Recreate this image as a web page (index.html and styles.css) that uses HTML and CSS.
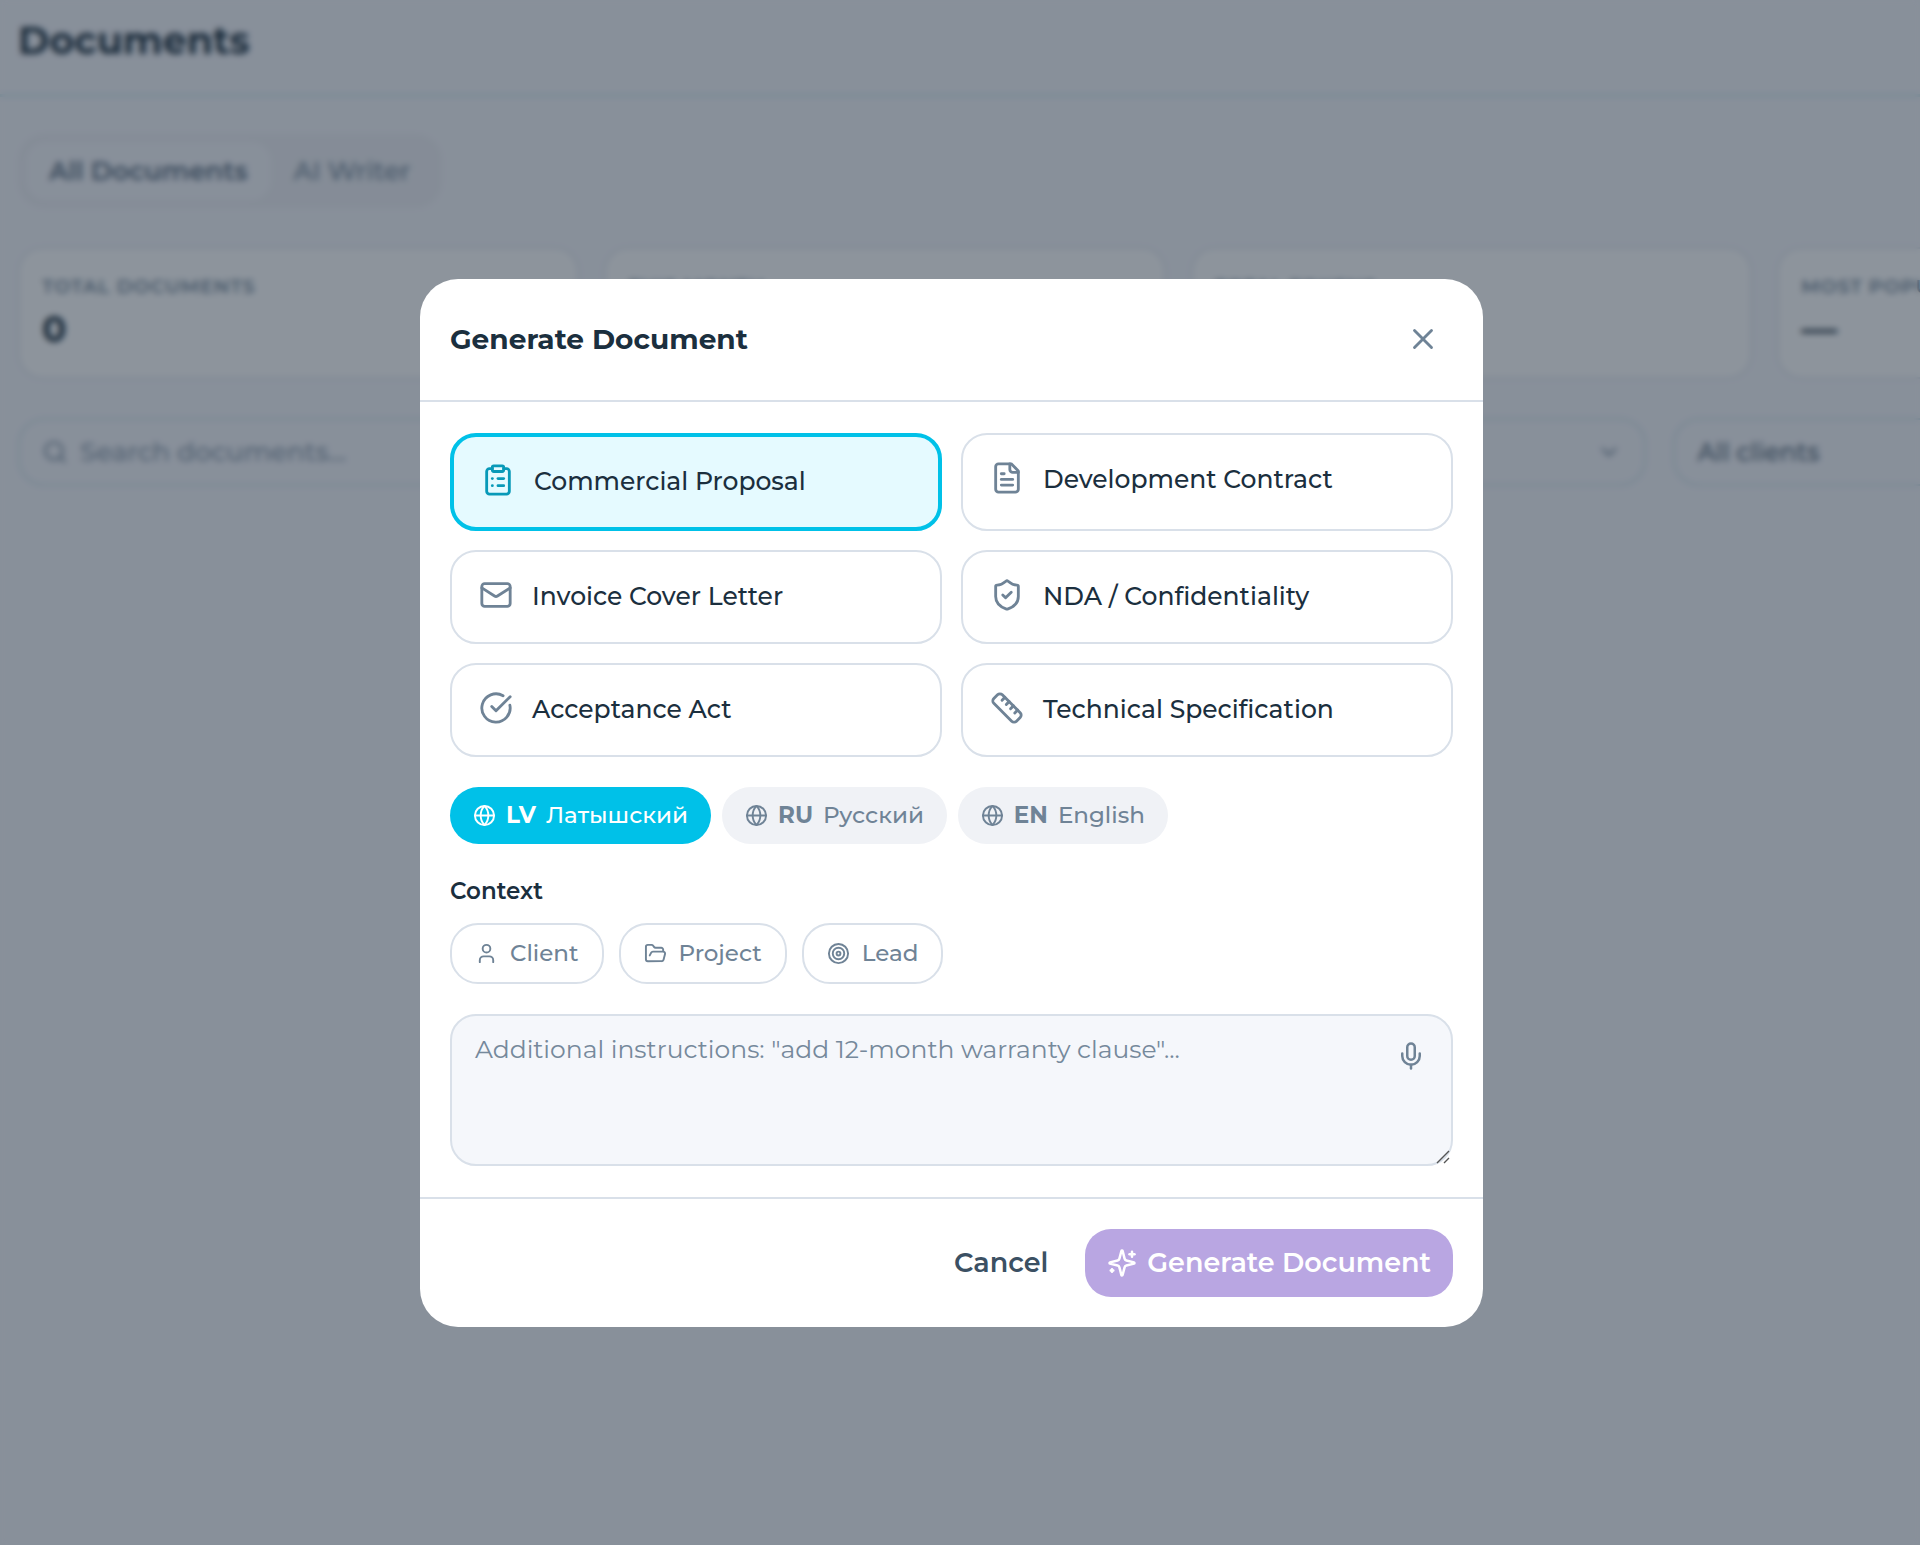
FILE: index.html
```html
<!DOCTYPE html>
<html lang="en">
<head>
<meta charset="utf-8">
<meta name="viewport" content="width=device-width, initial-scale=1">
<title>Documents</title>
<link rel="stylesheet" href="styles.css">
</head>
<body>
<div class="page">
  <header class="page-header"><h1 class="page-title">Documents</h1></header>
  <main class="content">
    <nav class="tabs">
      <button class="tab tab-active" type="button">All Documents</button>
      <button class="tab" type="button">AI Writer</button>
    </nav>
    <section class="stats">
      <div class="stat"><span class="stat-label">Total documents</span><span class="stat-value">0</span></div>
      <div class="stat"><span class="stat-label">This month</span><span class="stat-value">0</span></div>
      <div class="stat"><span class="stat-label">Total tokens</span><span class="stat-value">0</span></div>
      <div class="stat"><span class="stat-label">Most popular</span><span class="stat-value">—</span></div>
    </section>
    <section class="filters">
      <label class="field">
        <svg class="icon icon-26" viewBox="0 0 24 24"><circle cx="11" cy="11" r="8"/><path d="m21 21-4.3-4.3"/></svg>
        <input class="field-input" type="search" aria-label="Search documents" placeholder="Search documents...">
      </label>
      <div class="field">
        <select class="field-input" aria-label="Type"><option>All types</option></select>
        <svg class="icon icon-26" viewBox="0 0 24 24"><path d="m6 9 6 6 6-6"/></svg>
      </div>
      <div class="field">
        <select class="field-input" aria-label="Client"><option>All clients</option></select>
        <svg class="icon icon-26" viewBox="0 0 24 24"><path d="m6 9 6 6 6-6"/></svg>
      </div>
    </section>
  </main>
</div>

<div class="overlay">
  <div class="modal" role="dialog" aria-modal="true" aria-labelledby="modal-title">
    <header class="modal-header">
      <h2 class="modal-title" id="modal-title">Generate Document</h2>
      <button class="close" type="button" aria-label="Close">
        <svg class="icon icon-34" viewBox="0 0 24 24"><path d="M18 6 6 18"/><path d="m6 6 12 12"/></svg>
      </button>
    </header>

    <div class="modal-body">
      <div class="types">
        <button class="type type-selected" type="button" aria-pressed="true">
          <svg class="icon icon-34" viewBox="0 0 24 24"><rect width="8" height="4" x="8" y="2" rx="1"/><path d="M16 4h2a2 2 0 0 1 2 2v14a2 2 0 0 1-2 2H6a2 2 0 0 1-2-2V6a2 2 0 0 1 2-2h2"/><path d="M12 11h4"/><path d="M12 16h4"/><path d="M8 11h.01"/><path d="M8 16h.01"/></svg>
          <span>Commercial Proposal</span>
        </button>
        <button class="type" type="button">
          <svg class="icon icon-34" viewBox="0 0 24 24"><path d="M15 2H6a2 2 0 0 0-2 2v16a2 2 0 0 0 2 2h12a2 2 0 0 0 2-2V7Z"/><path d="M14 2v4a2 2 0 0 0 2 2h4"/><path d="M10 9H8"/><path d="M16 13H8"/><path d="M16 17H8"/></svg>
          <span>Development Contract</span>
        </button>
        <button class="type" type="button">
          <svg class="icon icon-34" viewBox="0 0 24 24"><rect width="20" height="16" x="2" y="4" rx="2"/><path d="m22 7-8.97 5.7a1.94 1.94 0 0 1-2.06 0L2 7"/></svg>
          <span>Invoice Cover Letter</span>
        </button>
        <button class="type" type="button">
          <svg class="icon icon-34" viewBox="0 0 24 24"><path d="M20 13c0 5-3.5 7.5-7.66 8.95a1 1 0 0 1-.67-.01C7.5 20.5 4 18 4 13V6a1 1 0 0 1 1-1c2 0 4.5-1.2 6.24-2.72a1.17 1.17 0 0 1 1.52 0C14.51 3.81 17 5 19 5a1 1 0 0 1 1 1z"/><path d="m9 12 2 2 4-4"/></svg>
          <span>NDA / Confidentiality</span>
        </button>
        <button class="type" type="button">
          <svg class="icon icon-34" viewBox="0 0 24 24"><path d="M21.801 10A10 10 0 1 1 17 3.335"/><path d="m9 11 3 3L22 4"/></svg>
          <span>Acceptance Act</span>
        </button>
        <button class="type" type="button">
          <svg class="icon icon-34" viewBox="0 0 24 24"><path d="M21.3 15.3a2.4 2.4 0 0 1 0 3.4l-2.6 2.6a2.4 2.4 0 0 1-3.4 0L2.7 8.7a2.41 2.41 0 0 1 0-3.4l2.6-2.6a2.41 2.41 0 0 1 3.4 0Z"/><path d="m14.5 12.5 2-2"/><path d="m11.5 9.5 2-2"/><path d="m8.5 6.5 2-2"/><path d="m17.5 15.5 2-2"/></svg>
          <span>Technical Specification</span>
        </button>
      </div>

      <div class="languages">
        <button class="language language-selected" type="button" aria-pressed="true">
          <svg class="icon icon-23" viewBox="0 0 24 24"><circle cx="12" cy="12" r="10"/><path d="M12 2a14.5 14.5 0 0 0 0 20 14.5 14.5 0 0 0 0-20"/><path d="M2 12h20"/></svg>
          <b>LV</b><span>Латышский</span>
        </button>
        <button class="language" type="button">
          <svg class="icon icon-23" viewBox="0 0 24 24"><circle cx="12" cy="12" r="10"/><path d="M12 2a14.5 14.5 0 0 0 0 20 14.5 14.5 0 0 0 0-20"/><path d="M2 12h20"/></svg>
          <b>RU</b><span>Русский</span>
        </button>
        <button class="language" type="button">
          <svg class="icon icon-23" viewBox="0 0 24 24"><circle cx="12" cy="12" r="10"/><path d="M12 2a14.5 14.5 0 0 0 0 20 14.5 14.5 0 0 0 0-20"/><path d="M2 12h20"/></svg>
          <b>EN</b><span>English</span>
        </button>
      </div>

      <div class="context">
        <h3 class="context-title">Context</h3>
        <div class="chips">
          <button class="chip" type="button">
            <svg class="icon icon-23" viewBox="0 0 24 24"><path d="M19 21v-2a4 4 0 0 0-4-4H9a4 4 0 0 0-4 4v2"/><circle cx="12" cy="7" r="4"/></svg>
            Client
          </button>
          <button class="chip" type="button">
            <svg class="icon icon-23" viewBox="0 0 24 24"><path d="m6 14 1.5-2.9A2 2 0 0 1 9.24 10H20a2 2 0 0 1 1.94 2.5l-1.54 6a2 2 0 0 1-1.95 1.5H4a2 2 0 0 1-2-2V5a2 2 0 0 1 2-2h3.9a2 2 0 0 1 1.69.9l.81 1.2a2 2 0 0 0 1.67.9H18a2 2 0 0 1 2 2v2"/></svg>
            Project
          </button>
          <button class="chip" type="button">
            <svg class="icon icon-23" viewBox="0 0 24 24"><circle cx="12" cy="12" r="10"/><circle cx="12" cy="12" r="6"/><circle cx="12" cy="12" r="2"/></svg>
            Lead
          </button>
        </div>
      </div>

      <div class="instructions">
        <textarea class="instructions-input" aria-label="Additional instructions" placeholder='Additional instructions: "add 12-month warranty clause"...'></textarea>
        <button class="mic" type="button" aria-label="Dictate">
          <svg class="icon icon-30" viewBox="0 0 24 24"><path d="M12 2a3 3 0 0 0-3 3v7a3 3 0 0 0 6 0V5a3 3 0 0 0-3-3Z"/><path d="M19 10v2a7 7 0 0 1-14 0v-2"/><path d="M12 19v3"/></svg>
        </button>
        <svg class="grip" viewBox="0 0 14 14"><path d="M1 13 13 1M8 13l5-5"/></svg>
      </div>
    </div>

    <footer class="modal-footer">
      <button class="cancel" type="button">Cancel</button>
      <button class="generate" type="button">
        <svg class="icon icon-30" viewBox="0 0 24 24"><path d="M9.937 15.5A2 2 0 0 0 8.5 14.063l-6.135-1.582a.5.5 0 0 1 0-.962L8.5 9.936A2 2 0 0 0 9.937 8.5l1.582-6.135a.5.5 0 0 1 .963 0L14.063 8.5A2 2 0 0 0 15.5 9.937l6.135 1.581a.5.5 0 0 1 0 .964L15.5 14.063a2 2 0 0 0-1.437 1.437l-1.582 6.135a.5.5 0 0 1-.963 0z"/><path d="M20 3v4"/><path d="M22 5h-4"/><path d="M4 17v2"/><path d="M5 18H3"/></svg>
        Generate Document
      </button>
    </footer>
  </div>
</div>
</body>
</html>
```

FILE: styles.css
```css
:root {
  --ink: #1b2f3e;
  --muted: #6f8396;
  --line: #d9e0e9;
  --accent: #00c1e8;
  --surface: #f5f6fb;
}

* { box-sizing: border-box; }

body {
  margin: 0;
  overflow: hidden;
  background: var(--surface);
  color: var(--ink);
  font-family: Montserrat, Inter, sans-serif;
}

button, input, select, textarea {
  margin: 0;
  font: inherit;
  color: inherit;
}

button {
  padding: 0;
  border: 0;
  background: none;
  cursor: pointer;
}

h1, h2, h3 { margin: 0; }

.icon {
  flex: none;
  fill: none;
  stroke: currentColor;
  stroke-width: 2;
  stroke-linecap: round;
  stroke-linejoin: round;
}

.icon-23 { width: 23px; height: 23px; }
.icon-26 { width: 26px; height: 26px; }
.icon-30 { width: 30px; height: 30px; }
.icon-34 { width: 34px; height: 34px; }

/* Page behind the dialog */
.page {
  min-height: 100vh;
  overflow: hidden;
}

.page-header {
  padding: 17px 18px 29px;
  border-bottom: 3px solid #d3eaf0;
}

.page-title {
  font-size: 38px;
  line-height: 48px;
  font-weight: 700;
}

.content {
  display: flex;
  flex-direction: column;
  align-items: flex-start;
  padding: 37px 18px;
}

.tabs {
  display: flex;
  padding: 8px;
  border-radius: 26px;
  background: #eeeff4;
}

.tab {
  padding: 0 23px;
  border-radius: 20px;
  font-size: 26px;
  line-height: 58px;
  font-weight: 500;
  color: var(--muted);
}

.tab-active {
  background: var(--surface);
  color: #53667a;
  font-weight: 600;
}

.stats {
  display: grid;
  grid-template-columns: repeat(4, 29.8%);
  gap: 25px;
  width: 100%;
  margin-top: 39px;
}

.stat {
  display: flex;
  flex-direction: column;
  gap: 4px;
  padding: 24px 22px;
  border: 2px solid #e1e6ee;
  border-radius: 24px;
  background: #fff;
}

.stat-label {
  font-size: 19px;
  line-height: 28px;
  font-weight: 600;
  letter-spacing: 1px;
  text-transform: uppercase;
  color: var(--muted);
}

.stat-value {
  font-size: 36px;
  line-height: 48px;
  font-weight: 700;
}

.filters {
  display: grid;
  grid-template-columns: 60% 25% 25%;
  gap: 27px;
  width: 100%;
  margin-top: 39px;
}

.field {
  display: flex;
  align-items: center;
  gap: 12px;
  height: 68px;
  padding: 0 22px;
  border: 2px solid #cfe3ea;
  border-radius: 26px;
  color: var(--muted);
}

.field-input {
  flex: 1;
  min-width: 0;
  padding: 0;
  border: 0;
  outline: 0;
  background: none;
  appearance: none;
  font-size: 26px;
  font-weight: 500;
  color: #4e6274;
}

select.field-input { font-size: 25px; }

.field-input::placeholder { color: #8a9aab; }

/* Dialog */
.overlay {
  position: fixed;
  inset: 0;
  display: flex;
  align-items: center;
  justify-content: center;
  padding: 60px 17px 0 0;
  background: rgba(27, 41, 58, 0.5);
  backdrop-filter: blur(3px);
}

.modal {
  width: 100%;
  max-width: 1063px;
  border-radius: 38px;
  background: #fff;
}

.modal-header {
  display: flex;
  align-items: center;
  justify-content: space-between;
  padding: 30px;
  border-bottom: 2px solid var(--line);
}

.modal-title {
  font-size: 28px;
  line-height: 60px;
  font-weight: 700;
}

.close {
  display: flex;
  align-items: center;
  justify-content: center;
  width: 61px;
  height: 61px;
  color: var(--muted);
}

.modal-body {
  display: flex;
  flex-direction: column;
  gap: 30px;
  padding: 31px 30px;
}

.types {
  display: grid;
  grid-template-columns: 1fr 1fr;
  gap: 19px;
}

.type {
  display: flex;
  align-items: flex-start;
  gap: 19px;
  padding: 26px 27px 28px;
  border: 2px solid var(--line);
  border-radius: 26px;
  font-size: 25px;
  line-height: 36px;
  font-weight: 500;
  text-align: left;
}

.type .icon { color: var(--muted); }

.type-selected {
  border: 4px solid var(--accent);
  background: #e5faff;
}

.type-selected .icon { color: #0899b8; }

.languages {
  display: flex;
  flex-wrap: wrap;
  gap: 11px;
}

.language {
  display: flex;
  align-items: center;
  gap: 10px;
  padding: 0 23px;
  border-radius: 29px;
  background: #f0f2f6;
  color: var(--muted);
  font-size: 23px;
  line-height: 57px;
  font-weight: 500;
}

.language b { font-weight: 700; }

.language-selected {
  background: var(--accent);
  color: #fff;
}

.context {
  display: flex;
  flex-direction: column;
  gap: 15px;
}

.context-title {
  font-size: 23px;
  line-height: 34px;
  font-weight: 600;
}

.chips {
  display: flex;
  flex-wrap: wrap;
  gap: 15px;
}

.chip {
  display: flex;
  align-items: center;
  gap: 12px;
  padding: 0 23px;
  border: 2px solid var(--line);
  border-radius: 28px;
  color: var(--muted);
  font-size: 23px;
  line-height: 57px;
  font-weight: 500;
}

.instructions {
  position: relative;
  display: flex;
}

.instructions-input {
  width: 100%;
  height: 152px;
  padding: 15px 76px 15px 23px;
  border: 2px solid var(--line);
  border-radius: 26px;
  outline: 0;
  background: #f5f7fb;
  font-size: 25px;
  line-height: 36px;
  resize: vertical;
}

.instructions-input::placeholder { color: #76899b; }

.instructions-input::-webkit-resizer { background: transparent; }

.grip {
  position: absolute;
  right: 3px;
  bottom: 2px;
  width: 14px;
  height: 14px;
  fill: none;
  stroke: #555;
  stroke-width: 1.4;
  pointer-events: none;
}

.mic {
  position: absolute;
  top: 15px;
  right: 15px;
  display: flex;
  align-items: center;
  justify-content: center;
  width: 54px;
  height: 54px;
  color: var(--muted);
}

.modal-footer {
  display: flex;
  align-items: center;
  justify-content: flex-end;
  gap: 15px;
  padding: 30px;
  border-top: 2px solid var(--line);
}

.cancel,
.generate {
  display: flex;
  align-items: center;
  gap: 10px;
  padding: 0 22px;
  border-radius: 26px;
  font-size: 27px;
  line-height: 68px;
  font-weight: 600;
}

.cancel { color: #3b5063; }

.generate {
  background: #b9a6e2;
  color: #fff;
}
```
